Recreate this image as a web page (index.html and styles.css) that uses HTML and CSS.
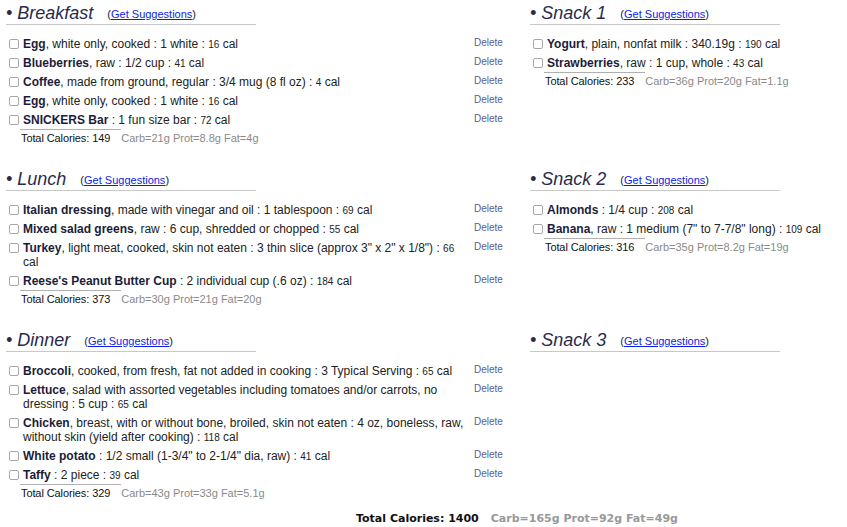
FILE: index.html
```html
<!DOCTYPE html>
<html lang="en">
<head>
<meta charset="utf-8">
<title>Food Diary</title>
<link rel="stylesheet" href="styles.css">
</head>
<body>
<div class="page">
  <div class="meals">
    <section class="meal">
      <h2 class="meal-title"><span class="meal-name">• Breakfast</span><span class="sugg">(<a href="#">Get Suggestions</a>)</span></h2>
      <ul class="items">
        <li class="item"><input type="checkbox" class="cb"><span class="desc"><b>Egg</b>, white only, cooked : 1 white : <span class="cal">16</span> cal</span><a class="del" href="#">Delete</a></li>
        <li class="item"><input type="checkbox" class="cb"><span class="desc"><b>Blueberries</b>, raw : 1/2 cup : <span class="cal">41</span> cal</span><a class="del" href="#">Delete</a></li>
        <li class="item"><input type="checkbox" class="cb"><span class="desc"><b>Coffee</b>, made from ground, regular : 3/4 mug (8 fl oz) : <span class="cal">4</span> cal</span><a class="del" href="#">Delete</a></li>
        <li class="item"><input type="checkbox" class="cb"><span class="desc"><b>Egg</b>, white only, cooked : 1 white : <span class="cal">16</span> cal</span><a class="del" href="#">Delete</a></li>
        <li class="item"><input type="checkbox" class="cb"><span class="desc"><b>SNICKERS Bar</b> : 1 fun size bar : <span class="cal">72</span> cal</span><a class="del" href="#">Delete</a></li>
      </ul>
      <div class="total"><span class="total-label">Total Calories: 149</span><span class="macros">Carb=21g Prot=8.8g Fat=4g</span></div>
    </section>

    <section class="meal">
      <h2 class="meal-title"><span class="meal-name">• Snack 1</span><span class="sugg">(<a href="#">Get Suggestions</a>)</span></h2>
      <ul class="items">
        <li class="item"><input type="checkbox" class="cb"><span class="desc"><b>Yogurt</b>, plain, nonfat milk : 340.19g : <span class="cal">190</span> cal</span><a class="del" href="#">Delete</a></li>
        <li class="item"><input type="checkbox" class="cb"><span class="desc"><b>Strawberries</b>, raw : 1 cup, whole : <span class="cal">43</span> cal</span><a class="del" href="#">Delete</a></li>
      </ul>
      <div class="total"><span class="total-label">Total Calories: 233</span><span class="macros">Carb=36g Prot=20g Fat=1.1g</span></div>
    </section>

    <section class="meal">
      <h2 class="meal-title"><span class="meal-name">• Lunch</span><span class="sugg">(<a href="#">Get Suggestions</a>)</span></h2>
      <ul class="items">
        <li class="item"><input type="checkbox" class="cb"><span class="desc"><b>Italian dressing</b>, made with vinegar and oil : 1 tablespoon : <span class="cal">69</span> cal</span><a class="del" href="#">Delete</a></li>
        <li class="item"><input type="checkbox" class="cb"><span class="desc"><b>Mixed salad greens</b>, raw : 6 cup, shredded or chopped : <span class="cal">55</span> cal</span><a class="del" href="#">Delete</a></li>
        <li class="item"><input type="checkbox" class="cb"><span class="desc"><b>Turkey</b>, light meat, cooked, skin not eaten : 3 thin slice (approx 3" x 2" x 1/8") : <span class="cal">66</span> cal</span><a class="del" href="#">Delete</a></li>
        <li class="item"><input type="checkbox" class="cb"><span class="desc"><b>Reese's Peanut Butter Cup</b> : 2 individual cup (.6 oz) : <span class="cal">184</span> cal</span><a class="del" href="#">Delete</a></li>
      </ul>
      <div class="total"><span class="total-label">Total Calories: 373</span><span class="macros">Carb=30g Prot=21g Fat=20g</span></div>
    </section>

    <section class="meal">
      <h2 class="meal-title"><span class="meal-name">• Snack 2</span><span class="sugg">(<a href="#">Get Suggestions</a>)</span></h2>
      <ul class="items">
        <li class="item"><input type="checkbox" class="cb"><span class="desc"><b>Almonds</b> : 1/4 cup : <span class="cal">208</span> cal</span><a class="del" href="#">Delete</a></li>
        <li class="item"><input type="checkbox" class="cb"><span class="desc"><b>Banana</b>, raw : 1 medium (7" to 7-7/8" long) : <span class="cal">109</span> cal</span><a class="del" href="#">Delete</a></li>
      </ul>
      <div class="total"><span class="total-label">Total Calories: 316</span><span class="macros">Carb=35g Prot=8.2g Fat=19g</span></div>
    </section>

    <section class="meal">
      <h2 class="meal-title"><span class="meal-name">• Dinner</span><span class="sugg">(<a href="#">Get Suggestions</a>)</span></h2>
      <ul class="items">
        <li class="item"><input type="checkbox" class="cb"><span class="desc"><b>Broccoli</b>, cooked, from fresh, fat not added in cooking : 3 Typical Serving : <span class="cal">65</span> cal</span><a class="del" href="#">Delete</a></li>
        <li class="item"><input type="checkbox" class="cb"><span class="desc"><b>Lettuce</b>, salad with assorted vegetables including tomatoes and/or carrots, no dressing : 5 cup : <span class="cal">65</span> cal</span><a class="del" href="#">Delete</a></li>
        <li class="item"><input type="checkbox" class="cb"><span class="desc"><b>Chicken</b>, breast, with or without bone, broiled, skin not eaten : 4 oz, boneless, raw, without skin (yield after cooking) : <span class="cal">118</span> cal</span><a class="del" href="#">Delete</a></li>
        <li class="item"><input type="checkbox" class="cb"><span class="desc"><b>White potato</b> : 1/2 small (1-3/4" to 2-1/4" dia, raw) : <span class="cal">41</span> cal</span><a class="del" href="#">Delete</a></li>
        <li class="item"><input type="checkbox" class="cb"><span class="desc"><b>Taffy</b> : 2 piece : <span class="cal">39</span> cal</span><a class="del" href="#">Delete</a></li>
      </ul>
      <div class="total"><span class="total-label">Total Calories: 329</span><span class="macros">Carb=43g Prot=33g Fat=5.1g</span></div>
    </section>

    <section class="meal">
      <h2 class="meal-title"><span class="meal-name">• Snack 3</span><span class="sugg">(<a href="#">Get Suggestions</a>)</span></h2>
    </section>
  </div>

  <div class="grand">
    <div class="grand-line"><span class="grand-label">Total Calories: 1400</span><span class="grand-macros">Carb=165g Prot=92g Fat=49g</span></div>
    <div class="grand-link"><a href="#">View Complete Nutrient Summary</a></div>
  </div>
</div>
</body>
</html>
```

FILE: styles.css
```css
html, body {
  margin: 0;
  padding: 0;
  overflow: hidden;
  background: #fff;
}

body {
  font-family: "Liberation Sans", Arial, sans-serif;
  color: #222;
}

.page {
  padding: 2px 0 0 6px;
  width: 1100px;
}

.meals {
  display: grid;
  grid-template-columns: 524px 524px;
  row-gap: 23px;
  align-items: start;
}

.meal {
  width: 524px;
}

.meal-title {
  margin: 0;
  width: 250px;
  height: 22px;
  border-bottom: 1px solid #c8c8c8;
  font-weight: normal;
  font-size: 18px;
  line-height: 22px;
  white-space: nowrap;
}

.meal-name {
  font-style: italic;
  color: #2a2a4c;
}

.sugg {
  margin-left: 14px;
  font-size: 11px;
  color: #222;
  vertical-align: 1px;
}

.sugg a {
  color: #0b1ee6;
  text-decoration: underline;
}

.items {
  list-style: none;
  margin: 9px 0 0 0;
  padding: 0;
}

.item {
  display: grid;
  grid-template-columns: 17px 445px 1fr;
  padding: 2.5px 0 2.5px 0;
  font-size: 12px;
  line-height: 14px;
}

.cb {
  appearance: none;
  -webkit-appearance: none;
  margin: 2.5px 0 0 3px;
  width: 10px;
  height: 10px;
  box-sizing: border-box;
  border: 1px solid #a8a8a8;
  border-radius: 2px;
  background: #fff;
}

.desc {
  padding-right: 4px;
}

.desc b {
  color: #1c1c3a;
}

.cal {
  font-size: 10px;
  line-height: 0;
}

.del {
  margin-left: 6px;
  font-size: 10px;
  line-height: 12px;
  color: #5a5e8c;
  text-decoration: none;
}

.total {
  margin-left: 14px;
  width: 100px;
  border-top: 1px solid #b0b0b0;
  padding-left: 1px;
  line-height: 13px;
  white-space: nowrap;
}

.total-label {
  font-size: 11px;
  letter-spacing: -0.1px;
  color: #111;
}

.macros {
  margin-left: 11px;
  font-size: 11px;
  color: #8a8a8a;
}

.grand {
  margin-top: 12px;
}

.grand-line {
  padding-left: 350px;
  font-family: "DejaVu Sans", Verdana, sans-serif;
  font-weight: bold;
  font-size: 11px;
  line-height: 13px;
  white-space: nowrap;
}

.grand-label {
  color: #111;
}

.grand-macros {
  margin-left: 12px;
  color: #999;
}

.grand-link {
  padding-left: 429px;
  font-size: 11px;
  line-height: 14px;
}

.grand-link a {
  color: #2233aa;
  text-decoration: none;
}
```
